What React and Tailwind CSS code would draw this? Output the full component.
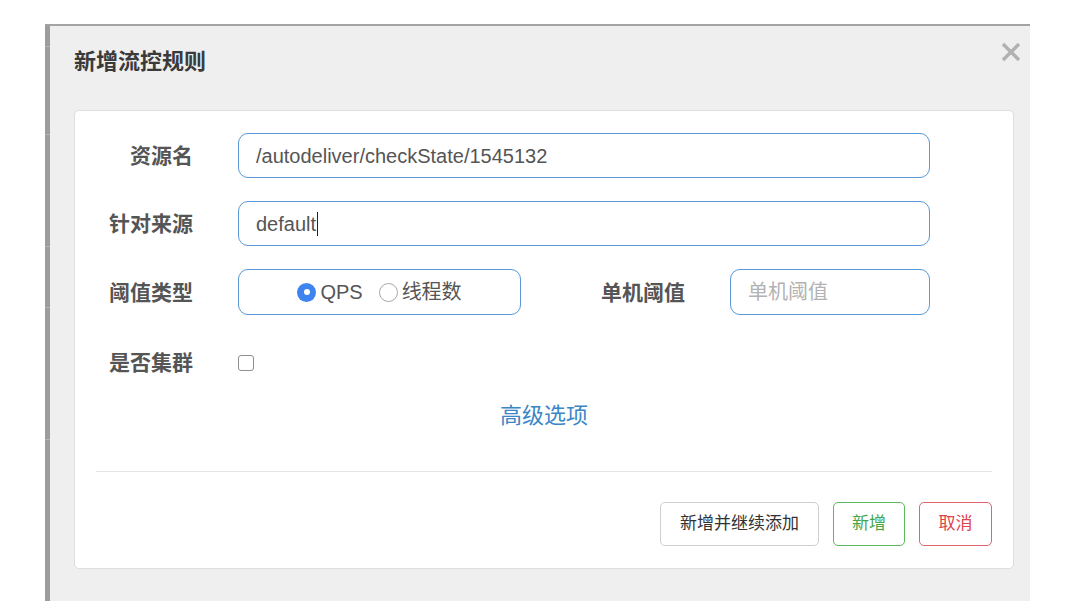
const FONT = 'font-["Liberation_Sans","Noto_Sans_CJK_SC",sans-serif]';

function Label({ children, className = '' }) {
  return (
    <div className={`text-right text-[21px] font-bold text-[#555] leading-none ${className}`}>{children}</div>
  );
}

function Radio({ checked }) {
  if (checked) {
    return (
      <span className="flex h-[19px] w-[19px] shrink-0 items-center justify-center rounded-full bg-[#3d84f0]">
        <span className="h-[6px] w-[6px] rounded-full bg-white" />
      </span>
    );
  }
  return <span className="block h-[19px] w-[19px] shrink-0 rounded-full border border-[#a8a8a8] bg-white" />;
}

export default function App() {
  return (
    <div className={`min-h-screen bg-white pt-[24px] pl-[45px] ${FONT}`}>
      <div className="flex h-[577px] w-[985px] border-t-2 border-[#a3a3a3]">
        {/* table rows peeking from behind the dialog */}
        <div className="flex w-[5px] flex-col bg-[#9d9d9d]">
          <div className="h-[21px] border-b border-[#b4b4b4]" />
          <div className="h-[88px] border-b border-[#b4b4b4]" />
          <div className="h-[112px] border-b border-[#b4b4b4]" />
          <div className="h-[61px] border-b border-[#b4b4b4]" />
          <div className="h-[132px] border-b border-[#b4b4b4]" />
        </div>

        <div className="relative flex-1 bg-[#efefef] pl-6 pr-4 pt-[21px]">
          <button className="absolute right-[9px] top-[16px] text-[#b1b1b1]" aria-label="close">
            <svg width="20" height="20" viewBox="0 0 20 20" fill="none" stroke="currentColor" strokeWidth="3.4" strokeLinecap="butt">
              <path d="M2 2 L18 18 M18 2 L2 18" />
            </svg>
          </button>

          <h3 className="h-[30px] text-[22px] font-bold leading-[30px] text-[#3a3a3a]">新增流控规则</h3>

          <div className="mt-[33px] rounded-[5px] border border-[#dedede] bg-white px-[21px] pt-[22px] pb-[22px]">
            <div className="flex h-[45px] items-center">
              <Label className="w-[97px]">资源名</Label>
              <div className="ml-[45px] flex h-[45px] w-[692px] items-center rounded-[10px] border border-[#5a97d6] px-[17px] text-[20px] text-[#555]">
                /autodeliver/checkState/1545132
              </div>
            </div>

            <div className="mt-[23px] flex h-[45px] items-center">
              <Label className="w-[97px]">针对来源</Label>
              <div className="ml-[45px] flex h-[45px] w-[692px] items-center rounded-[10px] border border-[#5a97d6] px-[17px] text-[20px] text-[#555]">
                default
                <span className="ml-px h-[24px] w-px bg-[#222]" />
              </div>
            </div>

            <div className="mt-[23px] flex h-[46px] items-center">
              <Label className="w-[97px]">阈值类型</Label>
              <div className="ml-[45px] flex h-[46px] w-[283px] items-center justify-center rounded-[10px] border border-[#5a97d6] text-[20px] text-[#555]">
                <Radio checked />
                <span className="ml-[4px]">QPS</span>
                <span className="ml-[16px]"><Radio /></span>
                <span className="ml-[4px]">线程数</span>
              </div>
              <Label className="w-[164px]">单机阈值</Label>
              <input
                placeholder="单机阈值"
                className="ml-[45px] h-[46px] w-[200px] rounded-[10px] border border-[#5a97d6] px-[17px] text-[20px] text-[#555] outline-none placeholder:text-[#b2b2b2]"
              />
            </div>

            <div className="mt-[25px] flex h-[45px] items-center">
              <Label className="w-[97px]">是否集群</Label>
              <span className="ml-[45px] h-[16px] w-[16px] rounded-[3px] border border-[#8f8f8f] bg-white" />
            </div>

            <div className="mt-[16px] text-center text-[22px] leading-[30px] text-[#3b86c6]">高级选项</div>

            <div className="mt-[40px] h-px bg-[#e4e4e4]" />

            <div className="mt-[30px] flex justify-end gap-[14px] text-[17px]">
              <button className="h-[44px] w-[159px] rounded-[5px] border border-[#cfcfcf] bg-white text-[#333]">新增并继续添加</button>
              <button className="h-[44px] w-[72px] rounded-[5px] border border-[#5cb85c] bg-white text-[#46a546]">新增</button>
              <button className="h-[44px] w-[73px] rounded-[5px] border border-[#e0656d] bg-white text-[#e0414c]">取消</button>
            </div>
          </div>
        </div>
      </div>
    </div>
  );
}
